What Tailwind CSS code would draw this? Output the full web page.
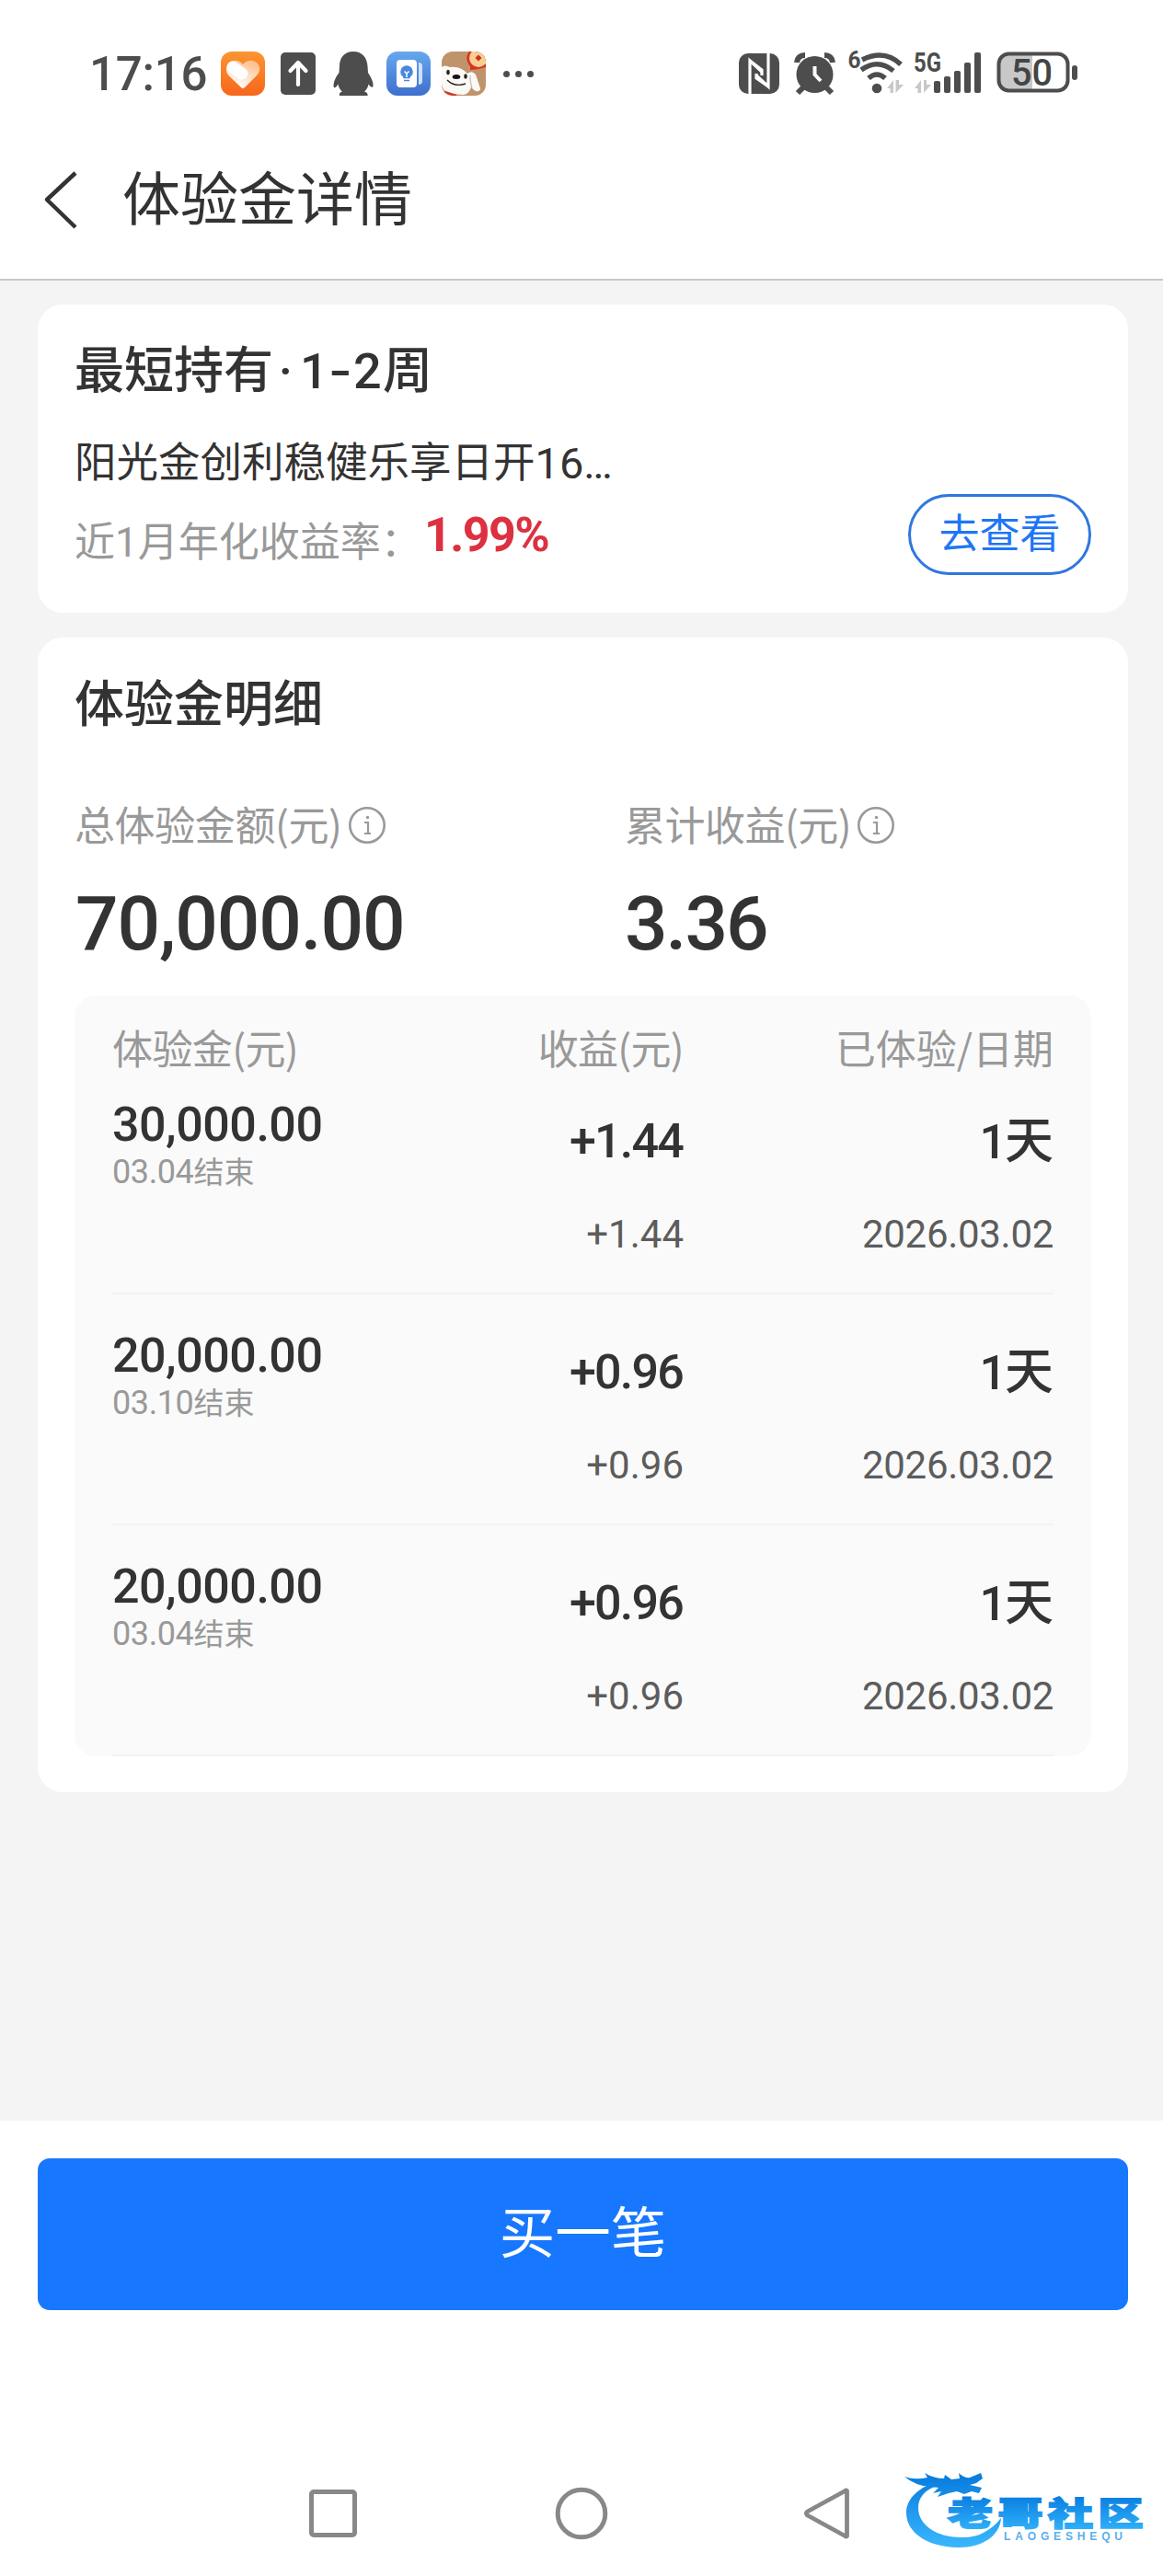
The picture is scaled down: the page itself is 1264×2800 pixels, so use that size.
<!DOCTYPE html>
<html lang="zh-CN">
<head>
<meta charset="utf-8">
<title>体验金详情</title>
<script src="https://cdn.jsdelivr.net/npm/@tailwindcss/browser@4"></script>
</head>
<body class="w-[1264px] h-[2800px] overflow-hidden relative bg-white text-[#333] font-[Roboto,'Noto_Sans_CJK_SC',sans-serif] leading-none whitespace-nowrap">

<!-- status bar -->
<div class="h-[132px] pt-[28px] pl-[97px] pr-[93px] flex items-center justify-between text-[#4d4d4d]">
  <div class="flex items-center">
    <span class="w-[143px] text-[51px] font-medium tracking-[-0.2px]">17:16</span>
    <svg class="w-[48px] h-[48px]" viewBox="0 0 48 48">
      <defs>
        <linearGradient id="og" x1="0" y1="0" x2="0" y2="1"><stop offset="0" stop-color="#fb9530"/><stop offset="1" stop-color="#f7661c"/></linearGradient>
        <linearGradient id="hg" x1="1" y1="0" x2="0.4" y2="1"><stop offset="0" stop-color="#fdb67c"/><stop offset="1" stop-color="#fff"/></linearGradient>
      </defs>
      <rect width="48" height="48" rx="12" fill="url(#og)"/>
      <path d="M24 14C20 9 13 8.500 9 12.500C5 16.500 5 22 8.500 26L22 39Q24 41 26 39L39 26C43 22 43.500 16.500 39.500 12.500C35 8.500 28 9 24 14Z" fill="url(#hg)"/>
      <path d="M13 17L23 24" stroke="#fff" stroke-width="13" stroke-linecap="round"/>
    </svg>
    <svg class="w-[38px] h-[48px] ml-[17px]" viewBox="0 0 38 48">
      <rect y="1" width="38" height="46" rx="5" fill="#4d4d4d"/>
      <path d="M19 36V13M10.500 21L19 12L27.500 21" fill="none" stroke="#fff" stroke-width="4.200" stroke-linecap="round" stroke-linejoin="round"/>
    </svg>
    <svg class="w-[44px] h-[48px] ml-[19px]" viewBox="0 0 44 48">
      <path d="M22 0C31 0 37 6 37.500 16L38 23C42 29 44 34 43.500 38C42.500 40 40 38 38.500 35.500C38 39 36 42 34 43.500C37 44.500 38 46 37.500 48H7C6.500 46 7 44.500 10 43.500C7.500 41.500 6 39 5.500 35.500C4 38 2 40 .8 39C0 34 2 29 6.500 23L7 16C7 6 13 0 22 0Z" fill="#4d4d4d"/>
    </svg>
    <svg class="w-[48px] h-[48px] ml-[14px]" viewBox="0 0 48 48">
      <defs><linearGradient id="bg" x1="0" y1="0" x2="0" y2="1"><stop offset="0" stop-color="#66a8ee"/><stop offset="1" stop-color="#3e6fcd"/></linearGradient></defs>
      <rect width="48" height="48" rx="12" fill="url(#bg)"/>
      <rect x="11" y="9" width="22" height="30" rx="4" fill="#fff"/>
      <path d="M35 12Q39 12 39 16V32Q39 36 35 36Z" fill="#cfe0fa"/>
      <circle cx="22" cy="22" r="6.800" fill="#4a87dc"/><path d="M19 26H25V28.500H19ZM19 31.500H25" fill="#4a87dc" stroke="#4a87dc" stroke-width="1.500"/>
      <path d="M19.500 21.500L22 24L24.500 21.500M22 24V28" stroke="#fff" stroke-width="1.500" fill="none"/>
    </svg>
    <svg class="w-[48px] h-[48px] ml-[12px]" viewBox="0 0 48 48">
      <defs><clipPath id="dc"><rect width="48" height="48" rx="12"/></clipPath></defs>
      <g clip-path="url(#dc)">
        <rect width="48" height="48" fill="#c0946b"/>
        <path d="M0 17Q3 14 9 17Q20 15 28 24Q33 20 37 25L42 40Q42 44 37 43Q34 42 32 38Q31 45 24 47L8 46Q0 42 0 34Z" fill="#fbf9f6"/>
        <path d="M31 26Q31 34 33 39" stroke="#cbb9a8" stroke-width="1.200" fill="none"/>
        <ellipse cx="7" cy="22.500" rx="1.800" ry="2.800" fill="#222"/><ellipse cx="26" cy="27" rx="1.800" ry="2.800" fill="#222"/>
        <ellipse cx="16" cy="27.500" rx="4.300" ry="2.500" fill="#151515"/>
        <path d="M6 31Q14 39 26 35" fill="none" stroke="#222" stroke-width="1.400"/>
        <path d="M3 44Q9 46 16 48" stroke="#d43524" stroke-width="2.500" fill="none"/>
        <path d="M30 0H48V17Q38 20 31 20V16Q24 8 30 0Z" fill="#d93222"/>
        <circle cx="40" cy="7" r="10" fill="#f7cf91"/>
        <path d="M40 3.500L43.500 7L40 10.500L36.500 7Z" fill="#cf2f20"/>
      </g>
    </svg>
    <span class="flex gap-[6px] ml-[19px]"><i class="size-[7px] rounded-full bg-[#4d4d4d]"></i><i class="size-[7px] rounded-full bg-[#4d4d4d]"></i><i class="size-[7px] rounded-full bg-[#4d4d4d]"></i></span>
  </div>
  <svg class="w-[370px] h-[52px] overflow-visible" viewBox="0 0 370 52">
    <!-- NFC -->
    <rect x="2" y="4" width="44" height="44" rx="10" fill="#4d4d4d"/>
    <path d="M14 49V12L27 24M34 3V40L21 28" stroke="#fff" stroke-width="3.200" fill="none"/>
    <path d="M14 12L27 22V28M34 40L21 31V26" stroke="#fff" stroke-width="3.200" fill="none"/>
    <!-- alarm -->
    <g fill="none" stroke="#4d4d4d"><path d="M65 14Q66 6 74 6M95 6Q103 6 104 14" stroke-width="6"/><path d="M72 41L66 47M97 41L103 47" stroke-width="6"/></g>
    <circle cx="84.500" cy="27" r="20" fill="#4d4d4d"/><path d="M84.500 18V27L91 34" stroke="#fff" stroke-width="4" fill="none"/>
    <!-- wifi -->
    <text x="120.500" y="20" font-size="26" font-weight="700" fill="#4d4d4d" textLength="14" lengthAdjust="spacingAndGlyphs">6</text>
    <g fill="none" stroke="#4d4d4d" stroke-width="5.500"><path d="M136 11Q160 -1 178 16"/><path d="M135 22Q153 9 170 23"/><path d="M143 31Q152 23 161 31"/></g>
    <circle cx="152" cy="42" r="5.300" fill="#4d4d4d"/>
    <path d="M163 42L170 33V47H166.500V42ZM172.500 33H176V38H181L172.500 47Z" fill="#c8c8c8"/>
    <!-- 5G -->
    <text x="192" y="24" font-size="29" font-weight="700" fill="#4d4d4d" textLength="30" lengthAdjust="spacingAndGlyphs">5G</text>
    <path d="M193 42L200 33V47H196.500V42ZM203 33H206V38H211L203 47Z" fill="#c8c8c8"/>
    <g fill="#4d4d4d"><rect x="214" y="34" width="7" height="13" rx="2"/><rect x="225" y="29" width="7" height="18" rx="2"/><rect x="236" y="23" width="7" height="24" rx="2"/><rect x="247" y="14" width="7" height="33" rx="2"/><rect x="258" y="3" width="7" height="44" rx="2"/></g>
    <!-- battery -->
    <path d="M296 5H321V44H296Q285 44 285 33V16Q285 5 296 5Z" fill="#c8c8c8"/>
    <rect x="284.500" y="4.500" width="75" height="40" rx="11" fill="none" stroke="#4d4d4d" stroke-width="4"/>
    <rect x="364" y="17" width="6" height="16" rx="3" fill="#4d4d4d"/>
    <text x="298" y="39" font-size="41" font-weight="500" fill="#444" textLength="45" lengthAdjust="spacingAndGlyphs">50</text>
  </svg>
</div>

<!-- title bar -->
<header class="h-[173px] border-b-2 border-[#c8c8c8] pl-[47px] flex items-center">
  <svg class="w-[38px] h-[75px]" viewBox="0 0 38 75"><path d="M35 8L4 37L35 67" fill="none" stroke="#333" stroke-width="4.500" stroke-linejoin="round"/></svg>
  <h1 class="ml-[48px] text-[63px]">体验金详情</h1>
</header>

<main class="h-[2000px] bg-[#f4f4f4] pt-[26px] pl-[41px] pr-[38px]">
  <section class="h-[335px] rounded-[27px] bg-white px-[40px] pt-[33px] pb-[41px] flex items-end justify-between">
    <div>
      <h2 class="h-[80px] flex items-center text-[54px] font-medium"><span>最短持有</span><span class="w-[27px] text-center">·</span><span class="w-[30px] ml-[2px]">1</span><span class="w-[28px] text-center scale-x-130">-</span><span class="w-[32px]">2</span><span>周</span></h2>
      <p class="h-[120px] flex items-center text-[45.500px]">阳光金创利稳健乐享日开<span class="text-[47px] mb-[2px]">16…</span></p>
      <p class="h-[52px] mb-[9px] flex items-center"><span class="w-[380px] text-[44px] text-[#999]">近1月年化收益率：</span><span class="mb-[17px] text-[52px] font-bold tracking-[-1.6px] text-[#dc3140]">1.99%</span></p>
    </div>
    <button class="w-[199px] h-[88px] rounded-full border-[3px] border-[#2f77df] text-[44px] text-[#1f76f5]">去查看</button>
  </section>

  <section class="mt-[27px] h-[1255px] rounded-[27px] bg-white px-[40px] pt-[33px]">
    <h2 class="h-[80px] pt-[2px] flex items-center text-[54px] font-medium">体验金明细</h2>
    <div class="mt-[61px] grid grid-cols-[598px_1fr]">
      <div>
        <div class="h-[60px] flex items-center text-[44px] text-[#999] font-['Noto_Sans_CJK_SC',sans-serif]"><p class="mb-[5px] tracking-[-0.4px]">总体验金额(元)</p><svg class="ml-[6px] size-[42px]" viewBox="0 0 42 42"><circle cx="21" cy="21" r="18.700" fill="none" stroke="#999" stroke-width="2.600"/><path d="M18 18H22V30M18 30H25" fill="none" stroke="#999" stroke-width="2.200"/><circle cx="21.500" cy="12.500" r="1.700" fill="#999"/></svg></div>
        <p class="mt-[31px] h-[90px] pt-[1px] pl-[1px] flex items-center text-[82px] font-medium tracking-[-1.1px]">70,000.00</p>
      </div>
      <div>
        <div class="h-[60px] flex items-center text-[44px] text-[#999] font-['Noto_Sans_CJK_SC',sans-serif]"><p class="mb-[5px] tracking-[-0.5px]">累计收益(元)</p><svg class="ml-[6px] size-[42px]" viewBox="0 0 42 42"><circle cx="21" cy="21" r="18.700" fill="none" stroke="#999" stroke-width="2.600"/><path d="M18 18H22V30M18 30H25" fill="none" stroke="#999" stroke-width="2.200"/><circle cx="21.500" cy="12.500" r="1.700" fill="#999"/></svg></div>
        <p class="mt-[31px] h-[90px] pt-[1px] flex items-center text-[82px] font-medium tracking-[-2px]">3.36</p>
      </div>
    </div>

    <div class="mt-[34px] h-[827px] rounded-[24px] bg-[#fafafa] px-[41px]">
      <div class="h-[74px] pt-[34px] grid grid-cols-[300px_321px_402px] text-[44px] text-[#999] font-['Noto_Sans_CJK_SC',sans-serif]">
        <span class="tracking-[-0.6px]">体验金(元)</span><span class="text-right tracking-[-0.7px]">收益(元)</span><span class="text-right">已体验/日期</span>
      </div>

      <div class="h-[251px] border-b-2 border-[#f3f3f3] grid grid-cols-[300px_321px_402px]">
        <div class="pt-[41px]"><p class="text-[52px] font-medium tracking-[-0.5px]">30,000.00</p><p class="mt-[7px] text-[33px] text-[#999]"><span class="text-[36px] tracking-[-0.4px]">03.04</span>结束</p></div>
        <div class="pt-[59px] text-right"><p class="h-[52px] pr-[1px] text-[52px] font-medium tracking-[-1.800px]">+1.44</p><p class="mt-[54px] text-[42px] text-[#5c5c5c]">+1.44</p></div>
        <div class="pt-[59px] text-right"><p class="h-[52px] text-[53px] font-medium"><span class="text-[52px] tracking-[-2px]">1</span>天</p><p class="mt-[54px] text-[42px] tracking-[-0.3px] text-[#5c5c5c]">2026.03.02</p></div>
      </div>
      <div class="h-[251px] border-b-2 border-[#f3f3f3] grid grid-cols-[300px_321px_402px]">
        <div class="pt-[41px]"><p class="text-[52px] font-medium tracking-[-0.5px]">20,000.00</p><p class="mt-[7px] text-[33px] text-[#999]"><span class="text-[36px] tracking-[-0.4px]">03.10</span>结束</p></div>
        <div class="pt-[59px] text-right"><p class="h-[52px] pr-[1px] text-[52px] font-medium tracking-[-1.800px]">+0.96</p><p class="mt-[54px] text-[42px] text-[#5c5c5c]">+0.96</p></div>
        <div class="pt-[59px] text-right"><p class="h-[52px] text-[53px] font-medium"><span class="text-[52px] tracking-[-2px]">1</span>天</p><p class="mt-[54px] text-[42px] tracking-[-0.3px] text-[#5c5c5c]">2026.03.02</p></div>
      </div>
      <div class="h-[251px] border-b-2 border-[#f3f3f3] grid grid-cols-[300px_321px_402px]">
        <div class="pt-[41px]"><p class="text-[52px] font-medium tracking-[-0.5px]">20,000.00</p><p class="mt-[7px] text-[33px] text-[#999]"><span class="text-[36px] tracking-[-0.4px]">03.04</span>结束</p></div>
        <div class="pt-[59px] text-right"><p class="h-[52px] pr-[1px] text-[52px] font-medium tracking-[-1.800px]">+0.96</p><p class="mt-[54px] text-[42px] text-[#5c5c5c]">+0.96</p></div>
        <div class="pt-[59px] text-right"><p class="h-[52px] text-[53px] font-medium"><span class="text-[52px] tracking-[-2px]">1</span>天</p><p class="mt-[54px] text-[42px] tracking-[-0.3px] text-[#5c5c5c]">2026.03.02</p></div>
      </div>
    </div>
  </section>
</main>

<footer class="pt-[41px] pl-[41px] pr-[38px]">
  <button class="block w-full h-[165px] pt-[2px] rounded-[13px] bg-[#1777ff] text-white text-[60.500px]">买一笔</button>
</footer>

<!-- system navigation -->
<nav class="mt-[192px] pl-[336px] flex items-center text-[#888]">
  <svg class="w-[52px] h-[58px]" viewBox="0 0 52 58"><rect x="2.500" y="5.500" width="47" height="47" rx="2.500" fill="none" stroke="currentColor" stroke-width="5"/></svg>
  <svg class="w-[58px] h-[58px] ml-[215px]" viewBox="0 0 58 58"><circle cx="29" cy="29" r="25.800" fill="none" stroke="currentColor" stroke-width="5"/></svg>
  <svg class="w-[52px] h-[58px] ml-[212px]" viewBox="0 0 52 58"><path d="M47.500 4.500V53.500Q46.500 54.500 45.500 53.500L4.500 31Q2.500 29 4.500 27L45.500 4.500Q46.500 3.500 47.500 4.500Z" fill="none" stroke="currentColor" stroke-width="4.800" stroke-linejoin="round"/></svg>
</nav>

<!-- community watermark -->
<svg class="absolute left-[960px] top-[2660px] w-[304px] h-[140px]" viewBox="0 0 304 140">
  <defs><linearGradient id="lg" gradientUnits="userSpaceOnUse" x1="0" y1="35" x2="0" y2="105"><stop offset="0" stop-color="#0b7fe0"/><stop offset="1" stop-color="#38b4fb"/></linearGradient>
  <linearGradient id="tg" x1="0" y1="0" x2="0" y2="1"><stop offset="0.200" stop-color="#0b7fe0"/><stop offset="0.900" stop-color="#2fb0fa"/></linearGradient></defs>
  <path d="M58 38C36 44 25 58 25 71C25 94 50 109 82 109C108 109 127 96 128 77C116 92 101 99 84 98C57 98 38 84 38 66C38 54 46 45 62 41Z" fill="url(#lg)"/>
  <path d="M23 32Q34 36 48 33L45 28Q54 34 66 34L67 30L74 35L83 34L82 28Q88 34 94 33L106 28L108 34L101 39L94 41L107 44L104 50L96 48L88 51L80 48L71 50L59 54L63 48L54 50L60 44L51 43Q35 42 23 32Z" fill="url(#lg)"/>
  <text x="70" y="118" transform="scale(1 .72)" font-family="'Noto Sans CJK SC'" font-weight="900" font-size="49" letter-spacing="5.500" fill="url(#tg)" stroke="url(#tg)" stroke-width="2.500">老哥社区</text>
  <text x="131" y="101" font-family="'Liberation Sans'" font-size="12" font-weight="700" textLength="129" fill="#5aaeea">LAOGESHEQU</text>
</svg>
</body>
</html>
